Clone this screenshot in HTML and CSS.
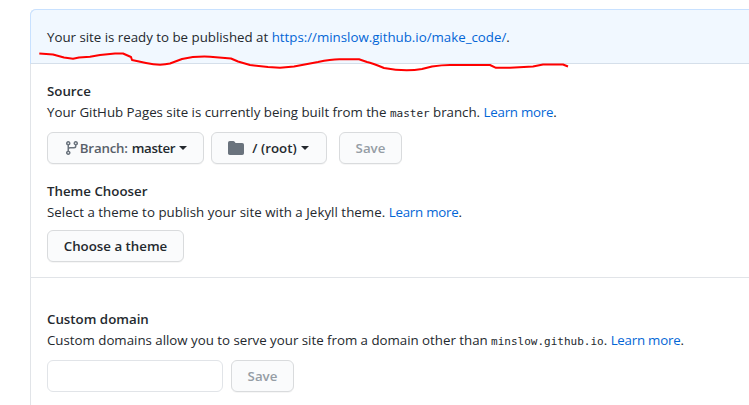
FILE: index.html
```html
<!DOCTYPE html>
<html lang="en">
<head>
<meta charset="utf-8">
<title>GitHub Pages settings</title>
<link rel="stylesheet" href="styles.css">
</head>
<body>
<main class="box">
  <div class="flash"><p class="text ready">Your site is ready to be published at <a href="#">https://minslow.github.io/make_code/</a>.</p></div>
  <section class="section source">
    <h2>Source</h2>
    <p class="text built">Your GitHub Pages site is currently being built from the <code>master</code> branch. <a class="more" href="#">Learn more</a>.</p>
    <div class="controls">
      <button class="btn branch"><svg class="git" width="16" height="16" viewBox="0 0 16 16"><path fill-rule="evenodd" d="M11.75 2.5a.75.75 0 100 1.5.75.75 0 000-1.5zm-2.25.75a2.25 2.25 0 113 2.122V6A2.5 2.5 0 0110 8.500H6a1 1 0 00-1 1v1.128a2.251 2.251 0 11-1.500 0V5.372a2.250 2.250 0 111.500 0v1.836A2.492 2.492 0 016 7h4a1 1 0 001-1v-.628A2.250 2.250 0 019.500 3.250zM4.250 12a.75.75 0 100 1.500.75.75 0 000-1.500zM3.500 3.250a.75.75 0 111.500 0 .75.75 0 01-1.500 0z"/></svg><span class="muted">Branch:</span><span class="branch-name">master</span><i class="caret"></i></button>
      <button class="btn folder"><svg width="16" height="16" viewBox="0 0 16 16"><path d="M1.750 1A1.750 1.750 0 000 2.750v10.500C0 14.216.784 15 1.750 15h12.500A1.750 1.750 0 0016 13.250v-8.500A1.750 1.750 0 0014.250 3h-6.500a.25.25 0 01-.2-.1l-.9-1.200c-.33-.44-.85-.7-1.400-.7h-3.500z"/></svg><span class="root-name">/ (root)</span><i class="caret"></i></button>
      <button class="btn save" disabled>Save</button>
    </div>
    <h2 class="theme-title">Theme Chooser</h2>
    <p class="text theme">Select a theme to publish your site with a Jekyll theme. <a class="more" href="#">Learn more</a>.</p>
    <div class="controls theme-controls"><button class="btn choose">Choose a theme</button></div>
  </section>
  <section class="section domain">
    <h2 class="domain-title">Custom domain</h2>
    <p class="text custom">Custom domains allow you to serve your site from a domain other than <code>minslow.github.io</code>. <a class="more" href="#">Learn more</a>.</p>
    <div class="controls"><input class="field" type="text" aria-label="Custom domain"><button class="btn save" disabled>Save</button></div>
  </section>
</main>
<svg class="underline" width="749" height="80" viewBox="0 0 749 80"><path d="M39.300 53.500L53 54.500L64 57.500L73 58.700L79 57.500L90 56.800L100 55L115 53.500H123L131 57L132 60L146 63Q160 66 170 63.500L182 59Q195 56 210 56.700L231 58.500L238 61.500L250 65L268 67L280 67.800L294 66.500L318 62Q332 59 341 59.300H359L367 62Q372 63 384 68Q405 72 422 69L432 66.500Q442 65 450 65H490L496 67.800H510L533 66.500L543 64.500H563L568 66.500"/></svg>
</body>
</html>
```
FILE: styles.css
```css
* { box-sizing: border-box; }
body {
  margin: 0;
  background: #fff;
  color: #24292e;
  font: 13.3px/21px "Open Sans", "Noto Sans", sans-serif;
}
.box {
  height: 396px;
  margin: 9px 0 0 30px;
  border: 1px solid #e1e4e8;
  border-width: 1px 0 0 1px;
  border-radius: 6px 0 0 0;
}
.flash {
  height: 55px;
  margin: -1px 0 -1px -1px;
  padding: 17px 16px;
  background: #f1f8ff;
  border: 1px solid #c8e1ff;
  border-right: 0;
  border-bottom-color: #d5dfea;
  border-radius: 6px 0 0 0;
}
.section { padding: 0 16px; }
.source { height: 215px; padding-top: 18px; border-bottom: 1px solid #e1e4e8; }
.domain { padding-top: 31px; }
h2 { margin: 0; font-size: 13.3px; font-weight: 600; line-height: 21px; }
.text { margin: 0; white-space: nowrap; }
.ready { letter-spacing: -.01px; }
.built { letter-spacing: -.017px; }
.theme { letter-spacing: .035px; }
.custom { letter-spacing: -.015px; }
a { color: #0366d6; text-decoration: none; }
.more { letter-spacing: -.23px; }
code { font: 11px "DejaVu Sans Mono", monospace; letter-spacing: 0; }
.controls { display: flex; margin-top: 9px; }
.theme-controls { margin-top: 7px; }
.btn {
  display: flex;
  align-items: center;
  justify-content: center;
  height: 32px;
  padding: 0;
  border: 1px solid #d9dbdd;
  border-radius: 6px;
  background: #fafbfc;
  box-shadow: 0 1px 0 rgba(27, 31, 35, .04);
  color: #24292e;
  font: 600 13.3px/20px "Open Sans", sans-serif;
  white-space: nowrap;
}
.btn:disabled { color: #959da5; }
.btn svg { fill: #6a737d; flex: none; }
.branch { width: 157px; }
.muted { color: #586069; margin-right: 4px; letter-spacing: -.2px; }
.branch-name { letter-spacing: -.35px; }
.folder { width: 116px; margin: 0 12px 0 7px; }
.folder svg { margin-left: -1px; }
.root-name { margin-left: 8px; }
.caret {
  margin-left: 4px;
  border: 4px solid transparent;
  border-top-color: #24292e;
  border-bottom-width: 0;
}
.save { width: 63px; }
.theme-title { margin-top: 17px; }
.choose { width: 137px; }
.field {
  width: 176px;
  height: 32px;
  margin-right: 8px;
  border: 1px solid #e1e4e8;
  border-radius: 6px;
  background: #fff;
}
.underline { position: absolute; left: 0; top: 0; fill: none; stroke: #f00; stroke-width: 2; stroke-linejoin: round; pointer-events: none; }
```
